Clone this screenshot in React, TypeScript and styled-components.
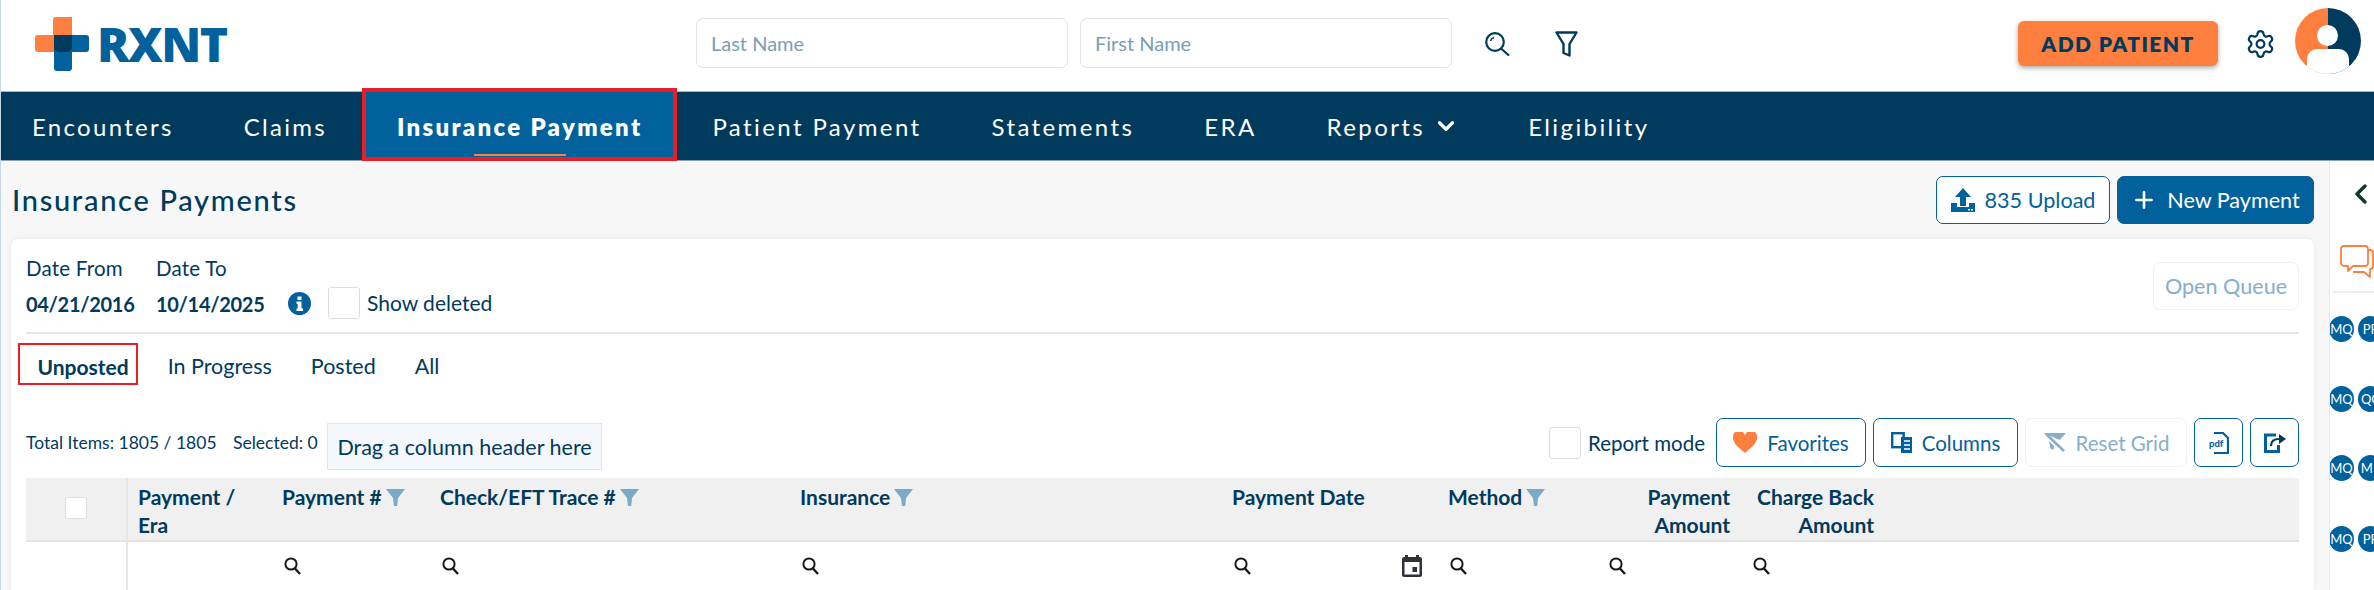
import React from "react";
import styled, { createGlobalStyle } from "styled-components";
import { Settings, Plus, ChevronLeft, ChevronDown } from "lucide-react";

const FONT = `"Lato", "Noto Sans", "Liberation Sans", sans-serif`;
const NAVY = "#003a5c";
const BLUE = "#00619c";
const ORANGE = "#ff7f3f";
const RED = "#ee1c25";

const Global = createGlobalStyle`
  html, body { margin: 0; padding: 0; background: #fff; }
  * { box-sizing: border-box; }
  body { font-family: ${FONT}; color: ${NAVY}; overflow: hidden; }
`;

const Page = styled.div`
  width: 2374px; height: 590px; overflow: hidden;
  display: flex; flex-direction: column;
  border-left: 1px solid #c8d6e8;
`;

const Header = styled.header`
  height: 92px; flex: none; display: flex; align-items: flex-start;
  background: #fff; border-bottom: 1px solid #a8bac8;
`;
const Logo = styled.div`
  display: flex; align-items: flex-start; flex: none; width: 695px; padding: 17px 0 0 34px; gap: 8px;
`;
const LogoWord = styled.span`
  font-family: "Open Sans", sans-serif; font-weight: 800; font-size: 48px; line-height: 52px;
  color: ${BLUE}; margin-top: 1px; letter-spacing: -1.5px;
`;
const NameInput = styled.div`
  width: 372px; height: 50px; flex: none; margin-top: 18px; margin-right: 12px;
  border: 1px solid #dfe3e6; border-radius: 7px; padding-left: 14px;
  display: flex; align-items: center; font-size: 20px; color: #7c9db2;
`;
const HeaderIcons = styled.div`
  display: flex; align-items: center; flex: none; gap: 45px; height: 26px; margin: 31px 0 0 21px; width: 533px;
`;
const AddPatient = styled.button`
  width: 200px; height: 45px; flex: none; margin-top: 21px; border: 0; border-radius: 6px;
  background: ${ORANGE}; color: ${NAVY}; font: 800 21px ${FONT}; letter-spacing: 1.4px;
  box-shadow: 0 2px 5px rgba(0,0,0,.35); padding: 0;
`;
const Gear = styled.div`
  margin: 27px 0 0 27px; width: 31px; height: 33px; flex: none; color: ${NAVY};
  display: flex; align-items: center; justify-content: center;
`;
const Avatar = styled.div`
  position: relative; width: 66px; height: 66px; flex: none; margin: 8px 0 0 19px; border-radius: 50%; overflow: hidden;
  background: linear-gradient(90deg, ${ORANGE} 50%, ${NAVY} 50%);
  &::before { content: ""; position: absolute; left: 22px; top: 17px; width: 21px; height: 21px; border-radius: 50%; background: #fff; }
  &::after { content: ""; position: absolute; left: 12px; top: 41px; width: 42px; height: 30px; border-radius: 10px 10px 0 0; background: #fff; }
`;

const Nav = styled.nav`
  height: 69px; flex: none; background: ${NAVY}; display: flex; align-items: stretch;
  border-bottom: 1px solid #8ba3b5;
`;
const NavItem = styled.a<{ $active?: boolean; $track?: number }>`
  position: relative; display: flex; align-items: center; gap: 8px; padding: 0 35px; color: #fff; white-space: nowrap;
  font-size: 24px; letter-spacing: ${p => p.$track ?? 2.4}px; font-weight: ${p => (p.$active ? 800 : 400)};
  background: ${p => (p.$active ? BLUE : "transparent")};
  &:first-child { margin-left: -4px; }
  ${p => p.$active && `
    &::before { content: ""; position: absolute; left: 0; right: 0; top: -4px; bottom: -1px; border: 4px solid ${RED}; }
    &::after { content: ""; position: absolute; left: 112px; width: 92px; bottom: 4px; height: 2px; background: ${ORANGE}; }
  `}
`;
const NavChevron = styled(ChevronDown)`
  margin-right: -1px;
`;

const Content = styled.div`
  flex: 1; display: flex; min-height: 0;
`;
const Main = styled.main`
  flex: 1; min-width: 0; background: #f7f7f7; padding: 15px 15px 0 10px; display: flex; flex-direction: column;
`;
const TitleRow = styled.div`
  display: flex; align-items: center; height: 48px; margin-bottom: 15px; gap: 7px;
`;
const Title = styled.h1`
  margin: 0 auto 2px 1px; font-size: 29px; font-weight: 500; letter-spacing: 1.7px; color: ${NAVY};
`;
const Btn = styled.button<{ $variant?: "outline" | "solid" | "off"; $w: number; $h?: number }>`
  width: ${p => p.$w}px; height: ${p => p.$h ?? 48}px; flex: none; border-radius: 7px; padding: 0;
  display: flex; align-items: center; justify-content: center; gap: 10px;
  font: 400 ${p => (p.$h ? 20.5 : 21.6)}px ${FONT};
  border: 1px solid ${p => (p.$variant === "off" ? "#eef0f2" : BLUE)};
  background: ${p => (p.$variant === "solid" ? BLUE : "#fff")};
  color: ${p => (p.$variant === "solid" ? "#fff" : p.$variant === "off" ? "#86aecb" : BLUE)};
`;

const Card = styled.section`
  flex: 1; background: #fff; border-radius: 7px 7px 0 0; padding: 0 15px; box-shadow: 0 0 5px rgba(0,0,0,.08);
`;
const FilterRow = styled.div`
  display: flex; align-items: flex-end; padding: 16px 0 13px; border-bottom: 2px solid #e5e5e5; height: 95px;
`;
const DateCol = styled.div<{ $w: number }>`
  width: ${p => p.$w}px; display: flex; flex-direction: column;
`;
const DateLabel = styled.span`
  font-size: 20.5px; line-height: 26px; color: ${NAVY}; letter-spacing: .2px; white-space: nowrap;
`;
const DateValue = styled.span`
  font-size: 20px; line-height: 30px; margin-top: 8px; font-weight: 700; color: ${NAVY}; white-space: nowrap; letter-spacing: -.3px;
`;
const InfoDot = styled.div`
  width: 23px; height: 23px; margin: 0 17px 4px 0; color: ${BLUE};
`;
const Check = styled.div<{ $size?: number }>`
  width: ${p => p.$size ?? 32}px; height: ${p => p.$size ?? 32}px; flex: none; background: #fff;
  border: 1px solid #dcdfe2; border-radius: 3px;
`;
const CheckLabel = styled.span`
  font-size: 21px; line-height: 30px; margin: 0 0 1px 7px; color: ${NAVY}; white-space: nowrap;
`;
const QueueWrap = styled.div`
  margin-left: auto; align-self: flex-start; margin-top: 7px;
`;

const Tabs = styled.div`
  display: flex; height: 42px; margin: 9px 0 33px -8px;
`;
const Tab = styled.a<{ $active?: boolean }>`
  position: relative; display: flex; align-items: center; padding: 4px 19.5px 0; font-size: 21.5px; color: ${NAVY}; white-space: nowrap;
  font-weight: ${p => (p.$active ? 700 : 400)};
  ${p => p.$active && `
    font-size: 21px;
    &::before { content: ""; position: absolute; left: 0; right: 10px; top: 0; bottom: 0; border: 2px solid ${RED}; }
  `}
`;

const Toolbar = styled.div`
  display: flex; align-items: flex-start; height: 52px; margin-bottom: 8px;
`;
const Totals = styled.span`
  font-size: 17.5px; line-height: 26px; margin-top: 12px; color: ${NAVY}; white-space: nowrap; width: 207px;
`;
const Selected = styled(Totals)`
  width: 94px;
`;
const DragBox = styled.div`
  width: 275px; height: 47px; margin-top: 5px; background: #f4f8fc; border: 1px solid #dde7ef;
  display: flex; align-items: center; justify-content: center; font-size: 21.5px; color: ${NAVY}; white-space: nowrap;
`;
const ToolRight = styled.div`
  margin-left: auto; display: flex; align-items: flex-start; gap: 7px;
`;
const ReportMode = styled.div`
  display: flex; align-items: center; margin-top: 9px; font-size: 20.5px; color: ${NAVY}; white-space: nowrap; margin-right: 1px;
`;
const ReportText = styled.span`
  margin-left: 7px; width: 120px;
`;

const TableCols = "102px 144px 158px 360px 432px 216px 159px 144px 147px 1fr";
const HeadRow = styled.div`
  display: grid; grid-template-columns: ${TableCols};
  height: 64px; background: #f0f0f0; border-bottom: 2px solid #e4e4e4;
`;
const HeadCell = styled.div<{ $right?: number; $first?: boolean }>`
  padding: 5px ${p => p.$right ?? 0}px 0 10px;
  font-size: 21px; line-height: 28px; font-weight: 700; color: ${NAVY}; white-space: nowrap;
  text-align: ${p => (p.$right ? "right" : "left")};
  ${p => p.$first && `border-right: 2px solid #e6e6e6; display: flex; align-items: center; justify-content: center; padding: 0 0 2px;`}
`;
const HeadLabel = styled.span`
  display: inline-flex; align-items: center; gap: 4px;
`;
const FilterGrid = styled(HeadRow)`
  height: 48px; background: #fff; border: 0;
`;
const FilterCell = styled.div<{ $first?: boolean }>`
  display: flex; align-items: center; justify-content: space-between; padding: 0 16px 0 12px; color: #1a1a1a;
  ${p => p.$first && `border-right: 2px solid #e6e6e6;`}
`;

const Side = styled.aside`
  width: 45px; flex: none; background: #fff; border-left: 1px solid #e8e8e8; display: flex; flex-direction: column; overflow: hidden;
`;
const SideChevron = styled.div`
  height: 62px; padding: 17px 0 0 15px; color: #0d3b2e;
`;
const SideChat = styled.div`
  height: 70px; margin-left: 3px; padding: 22px 0 0 7px; border-bottom: 2px solid #eeeeee;
`;
const BadgeList = styled.div`
  display: flex; flex-direction: column; margin-left: -1px;
`;
const BadgeRow = styled.div<{ $h: number }>`
  display: flex; gap: 4px; height: ${p => p.$h}px; padding-top: 23px; width: 70px;
`;
const Badge = styled.span`
  width: 25px; height: 26px; flex: none; border-radius: 50%; background: ${BLUE}; color: #fff;
  display: flex; align-items: center; justify-content: center; font: 400 13px "Lato", sans-serif;
`;

const Funnel = ({ c = "#7ba9c8" }: { c?: string }) => (
  <svg width={19} height={17} viewBox="0 0 19 17"><path d="M0 0h19l-7 9-.8 8H8l-1-8z" fill={c} /></svg>
);
const Mag = () => (
  <svg width={17} height={18} viewBox="0 0 17 18" fill="none" stroke="currentColor">
    <circle cx="7" cy="7" r="5.6" strokeWidth="2" /><path d="M11 11.5 16 17" strokeWidth="2.4" />
  </svg>
);
const HeaderSearch = () => (
  <svg width="25" height="24" viewBox="0 0 25 24" fill="none" stroke={NAVY} strokeWidth="2.2">
    <circle cx="10" cy="10" r="8.8" /><path d="M16 16.5 24 23.5" /><path d="M5.5 9a5 5 0 0 1 3.5-3.5" strokeWidth="1.6" />
  </svg>
);
const HeaderFunnel = () => (
  <svg width="23" height="26" viewBox="0 0 23 26" fill="none" stroke={NAVY} strokeWidth="2.4" strokeLinejoin="round">
    <path d="M1.5 1.5h20L14.5 13v11.5l-6-2.5v-9z" />
  </svg>
);
const LogoMark = () => (
  <svg width="54" height="54" viewBox="0 0 54 54">
    <path d="M21 0h16v35H3a3 3 0 0 1-3-3V21a3 3 0 0 1 3-3h15V3a3 3 0 0 1 3-3z" fill={ORANGE} />
    <path d="M19 18h32a3 3 0 0 1 3 3v11a3 3 0 0 1-3 3H37v16a3 3 0 0 1-3 3H22a3 3 0 0 1-3-3z" fill={BLUE} />
    <path d="M19 18h18v12a5 5 0 0 1-5 5h-8a5 5 0 0 1-5-5z" fill="#003a5c" />
  </svg>
);
const UploadIcon = () => (
  <svg width="24" height="24" viewBox="0 0 24 24" fill="currentColor">
    <path d="M12 0l8 9h-5v9H9V9H4z" /><path d="M0 15h6v4h12v-4h6v9H0z" />
    <rect x="17" y="21" width="2" height="1.5" fill="#fff" /><rect x="20" y="21" width="2" height="1.5" fill="#fff" />
  </svg>
);
const HeartIcon = () => (
  <svg width="24" height="21" viewBox="0 0 24 21"><path d="M12 21C5 15 0 11 0 6a6 6 0 0 1 12-2.500A6 6 0 0 1 24 6c0 5-5 9-12 15z" fill={ORANGE} /></svg>
);
const ColumnsIcon = () => (
  <svg width="21" height="21" viewBox="0 0 21 21" fill="none">
    <rect x="1.2" y="1.2" width="11.5" height="14" stroke={BLUE} strokeWidth="2.4" />
    <path d="M10 5h11v16H10z" fill={BLUE} />
    <path d="M13 9h6M13 13h6M13 17h6" stroke="#fff" strokeWidth="1.4" />
  </svg>
);
const ResetIcon = () => (
  <svg width="23" height="19" viewBox="0 0 23 19">
    <path d="M0 0h23l-6.500 7z" fill="#86aecb" /><path d="M6 8l5 5-.5 4-3-1.500z" fill="#86aecb" /><path d="M3 1l18 17" stroke="#86aecb" strokeWidth="2.6" />
  </svg>
);
const PdfIcon = () => (
  <svg width="20" height="22" viewBox="0 0 20 22">
    <path d="M5 1h9l5 5v15H5" fill="none" stroke={BLUE} strokeWidth="2.2" />
    <rect x="0" y="7" width="16" height="9" fill="#fff" />
    <text x="0" y="15" fontSize="9.5" fontWeight="900" fontFamily="Lato, sans-serif" fill={BLUE}>pdf</text>
  </svg>
);
const ExportIcon = () => (
  <svg width="22" height="20" viewBox="0 0 22 20" fill="none" stroke={BLUE} strokeWidth="3">
    <path d="M12 2H1.500v16.500h13V12" /><path d="M7 13c0-5 3-7 8-7" strokeWidth="2.2" stroke={NAVY} /><path d="M15 1l7 5-7 5z" fill={NAVY} stroke="none" />
  </svg>
);
const InfoIcon = () => (
  <svg width="23" height="23" viewBox="0 0 23 23">
    <circle cx="11.5" cy="11.5" r="11.5" fill={BLUE} />
    <rect x="9.500" y="4.500" width="4" height="3.500" fill="#fff" />
    <path d="M8.500 9.500h5v7H15v2.500H8.500v-2.500h1.200V12H8.500z" fill="#fff" />
  </svg>
);
const CalendarIcon = () => (
  <svg width="20" height="22" viewBox="0 0 20 22">
    <path d="M3 0h3v2h8V0h3v2h1a2 2 0 0 1 2 2v16a2 2 0 0 1-2 2H2a2 2 0 0 1-2-2V4a2 2 0 0 1 2-2h1z" fill="#2f3338" />
    <rect x="2.500" y="7" width="15" height="12.500" fill="#fff" /><rect x="10.500" y="12" width="4.500" height="5" fill="#2f3338" />
  </svg>
);
const ChatIcon = () => (
  <svg width="34" height="33" viewBox="0 0 34 33" fill="none" stroke={ORANGE} strokeWidth="1.8" strokeLinejoin="round">
    <path d="M4 1h21a3 3 0 0 1 3 3v14a3 3 0 0 1-3 3H13l-5 5v-5H4a3 3 0 0 1-3-3V4a3 3 0 0 1 3-3z" />
    <path d="M28 5h2a3 3 0 0 1 3 3v13a3 3 0 0 1-3 3v8l-6-5H13" />
  </svg>
);

export default function App() {
  return (
    <>
      <Global />
      <Page>
        <Header>
          <Logo><LogoMark /><LogoWord>RXNT</LogoWord></Logo>
          <NameInput>Last Name</NameInput>
          <NameInput>First Name</NameInput>
          <HeaderIcons><HeaderSearch /><HeaderFunnel /></HeaderIcons>
          <AddPatient>ADD PATIENT</AddPatient>
          <Gear><Settings size={36} strokeWidth={1.7} /></Gear>
          <Avatar />
        </Header>
        <Nav>
          <NavItem $track={2.3}>Encounters</NavItem>
          <NavItem $track={2.3}>Claims</NavItem>
          <NavItem $active $track={2.3}>Insurance Payment</NavItem>
          <NavItem>Patient Payment</NavItem>
          <NavItem>Statements</NavItem>
          <NavItem>ERA</NavItem>
          <NavItem>Reports<NavChevron size={26} strokeWidth={3} /></NavItem>
          <NavItem>Eligibility</NavItem>
        </Nav>
        <Content>
          <Main>
            <TitleRow>
              <Title>Insurance Payments</Title>
              <Btn $variant="outline" $w={174}><UploadIcon />835 Upload</Btn>
              <Btn $variant="solid" $w={197}><Plus size={26} strokeWidth={2.4} />New Payment</Btn>
            </TitleRow>
            <Card>
              <FilterRow>
                <DateCol $w={130}><DateLabel>Date From</DateLabel><DateValue>04/21/2016</DateValue></DateCol>
                <DateCol $w={132}><DateLabel>Date To</DateLabel><DateValue>10/14/2025</DateValue></DateCol>
                <InfoDot><InfoIcon /></InfoDot>
                <Check />
                <CheckLabel>Show deleted</CheckLabel>
                <QueueWrap><Btn $variant="off" $w={146}>Open Queue</Btn></QueueWrap>
              </FilterRow>
              <Tabs>
                <Tab $active>Unposted</Tab>
                <Tab>In Progress</Tab>
                <Tab>Posted</Tab>
                <Tab>All</Tab>
              </Tabs>
              <Toolbar>
                <Totals>Total Items: 1805 / 1805</Totals>
                <Selected>Selected: 0</Selected>
                <DragBox>Drag a column header here</DragBox>
                <ToolRight>
                  <ReportMode><Check /><ReportText>Report mode</ReportText></ReportMode>
                  <Btn $variant="outline" $w={150} $h={49}><HeartIcon />Favorites</Btn>
                  <Btn $variant="outline" $w={145} $h={49}><ColumnsIcon />Columns</Btn>
                  <Btn $variant="off" $w={162} $h={49}><ResetIcon />Reset Grid</Btn>
                  <Btn $variant="outline" $w={49} $h={49}><PdfIcon /></Btn>
                  <Btn $variant="outline" $w={49} $h={49}><ExportIcon /></Btn>
                </ToolRight>
              </Toolbar>
              <HeadRow>
                <HeadCell $first><Check $size={22} /></HeadCell>
                <HeadCell>Payment /<br />Era</HeadCell>
                <HeadCell><HeadLabel>Payment #<Funnel /></HeadLabel></HeadCell>
                <HeadCell><HeadLabel>Check/EFT Trace #<Funnel /></HeadLabel></HeadCell>
                <HeadCell><HeadLabel>Insurance<Funnel /></HeadLabel></HeadCell>
                <HeadCell>Payment Date</HeadCell>
                <HeadCell><HeadLabel>Method<Funnel /></HeadLabel></HeadCell>
                <HeadCell $right={11}>Payment<br />Amount</HeadCell>
                <HeadCell $right={14}>Charge Back<br />Amount</HeadCell>
                <HeadCell />
              </HeadRow>
              <FilterGrid>
                <FilterCell $first />
                <FilterCell />
                <FilterCell><Mag /></FilterCell>
                <FilterCell><Mag /></FilterCell>
                <FilterCell><Mag /></FilterCell>
                <FilterCell><Mag /><CalendarIcon /></FilterCell>
                <FilterCell><Mag /></FilterCell>
                <FilterCell><Mag /></FilterCell>
                <FilterCell><Mag /></FilterCell>
                <FilterCell />
              </FilterGrid>
            </Card>
          </Main>
          <Side>
            <SideChevron><ChevronLeft size={32} strokeWidth={2.6} /></SideChevron>
            <SideChat><ChatIcon /></SideChat>
            <BadgeList>
              <BadgeRow $h={70}><Badge>MQ</Badge><Badge>PP</Badge></BadgeRow>
              <BadgeRow $h={69}><Badge>MQ</Badge><Badge>QC</Badge></BadgeRow>
              <BadgeRow $h={71}><Badge>MQ</Badge><Badge>M1</Badge></BadgeRow>
              <BadgeRow $h={70}><Badge>MQ</Badge><Badge>PP</Badge></BadgeRow>
            </BadgeList>
          </Side>
        </Content>
      </Page>
    </>
  );
}
